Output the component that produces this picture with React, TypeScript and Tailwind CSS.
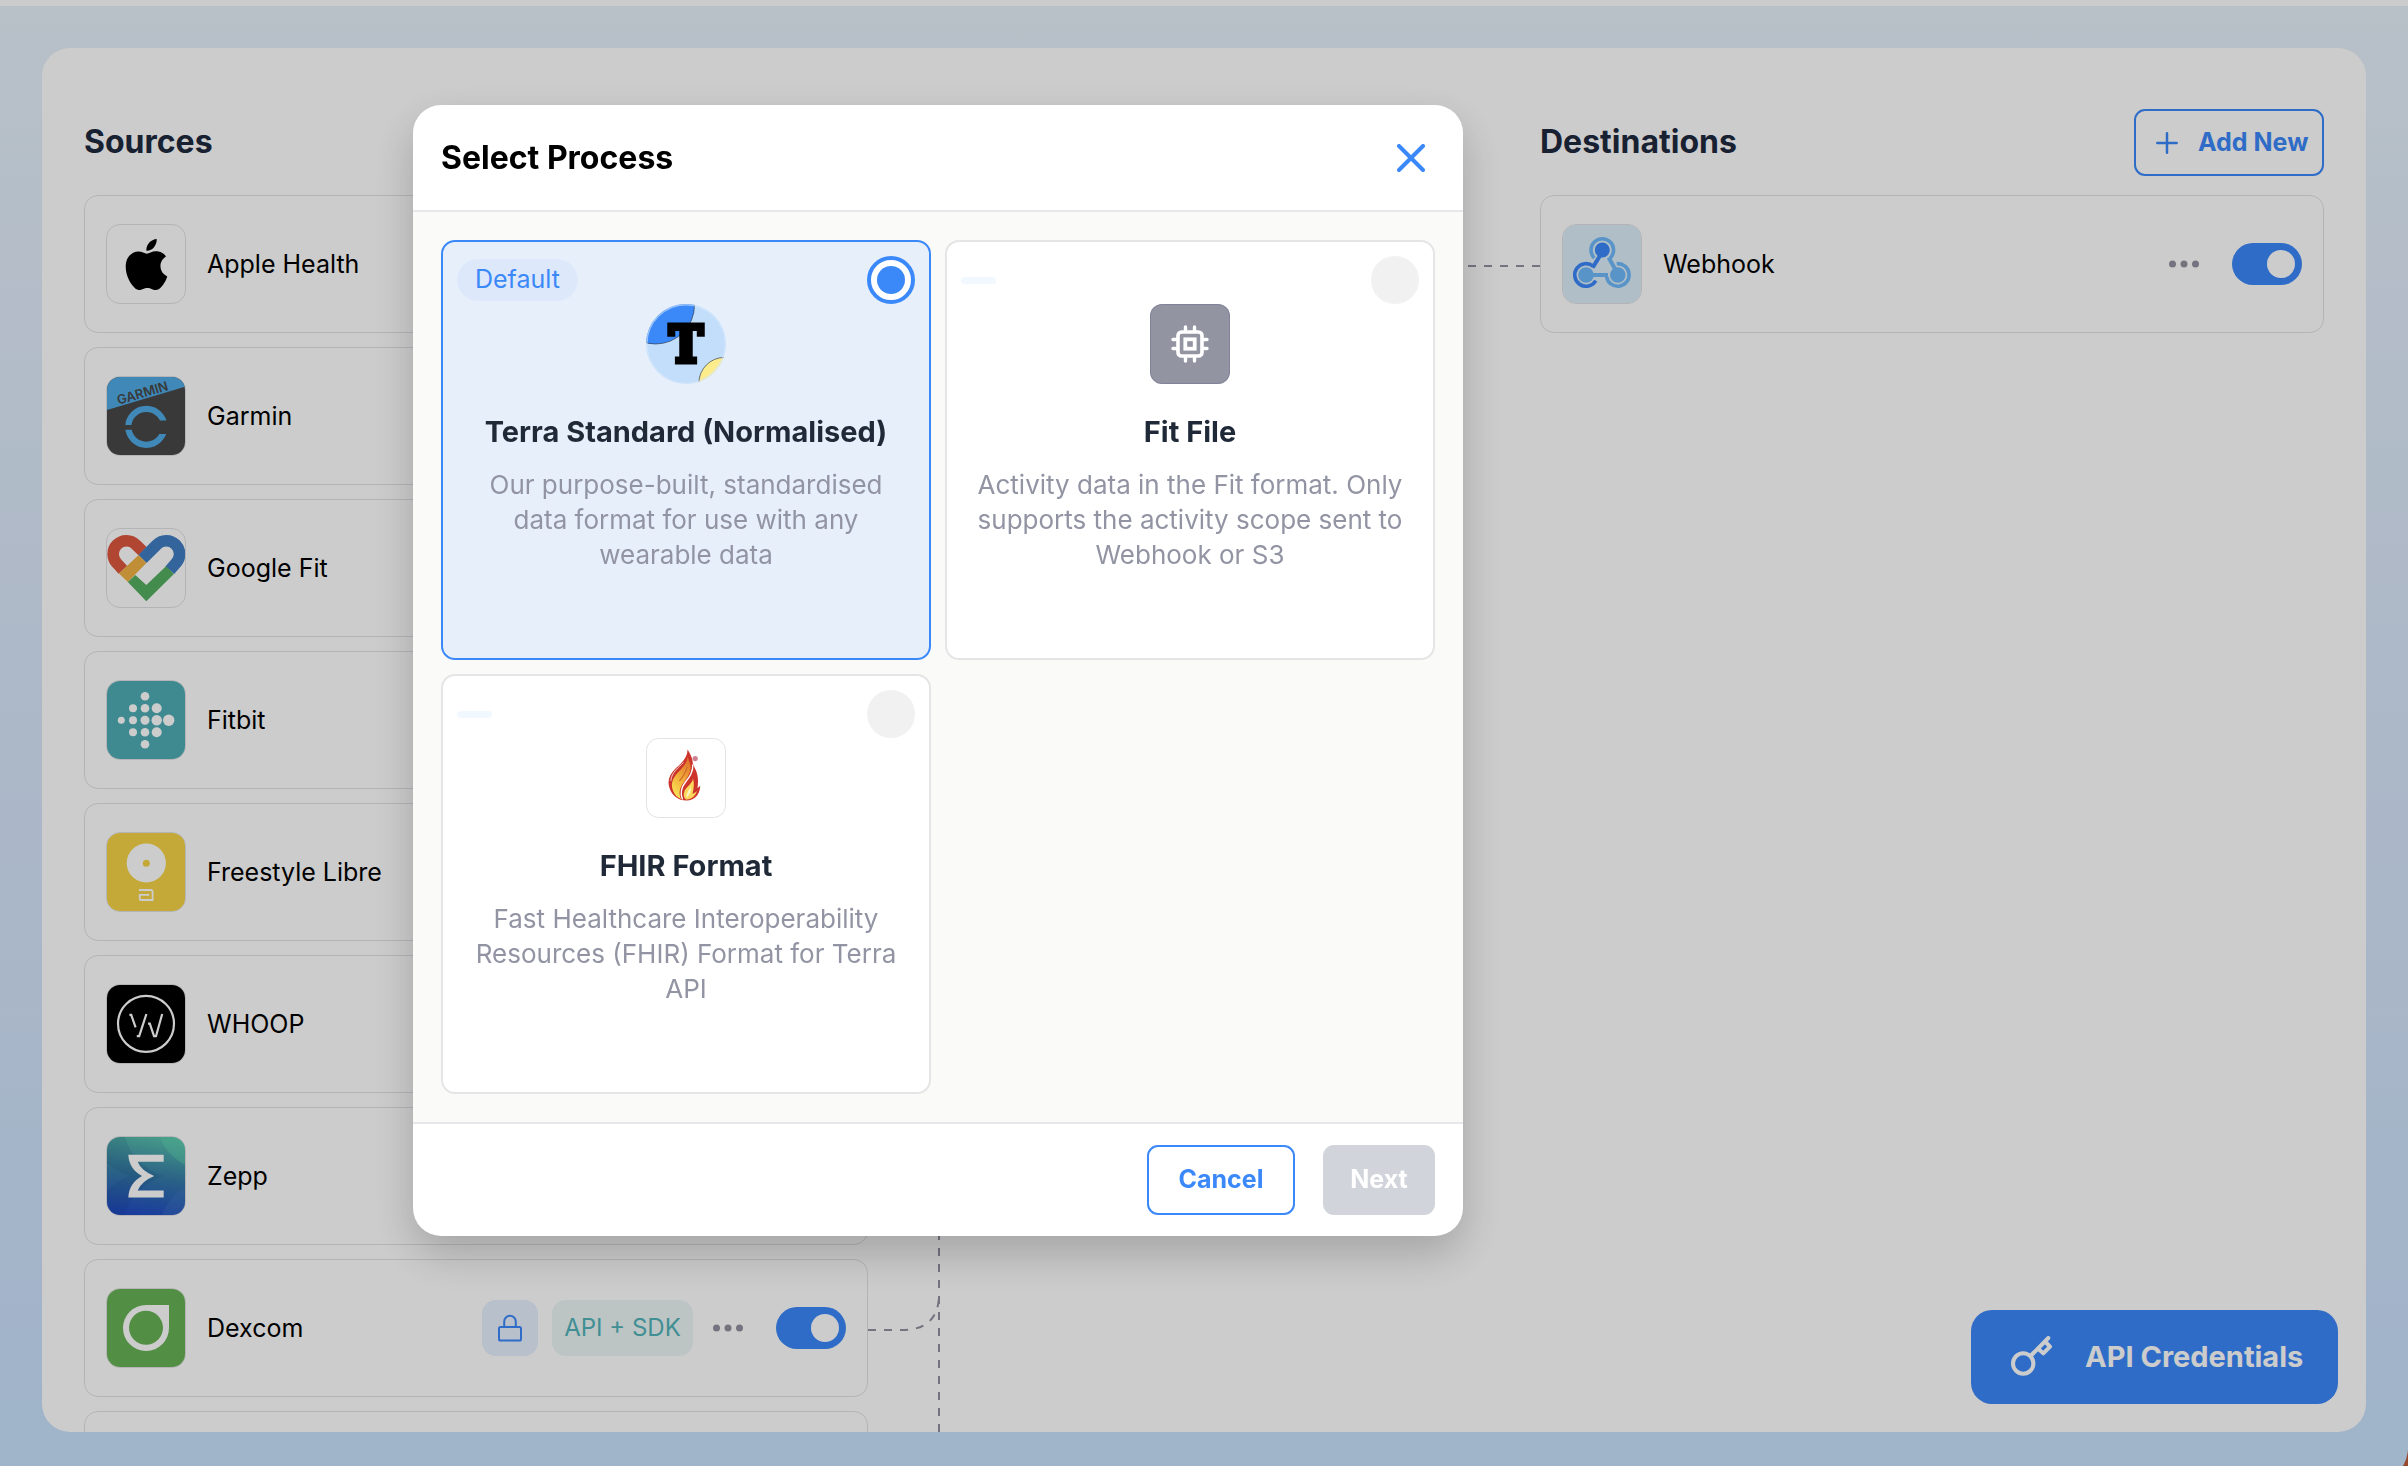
import { useState, type ReactNode } from "react";
import { SiApple } from "react-icons/si";

const full = "block h-full w-full";

function AppleArt() {
  return (
    <div className="flex h-full w-full items-center justify-center text-black">
      <SiApple size={51} />
    </div>
  );
}

function GarminArt() {
  return (
    <svg viewBox="0 0 78 78" className={full} aria-hidden="true">
      <defs>
        <clipPath id="garmin-ring">
          <rect x="0" y="20" width="39" height="28" />
          <rect x="39" y="20" width="39" height="23.6" />
          <rect x="0" y="52.7" width="39" height="25" />
          <rect x="39" y="57" width="39" height="20" />
        </clipPath>
      </defs>
      <rect width="78" height="78" fill="#484848" />
      <path d="M0 0H78V9.7L0 33Z" fill="#4faae5" />
      <text
        x="35.5"
        y="20.5"
        transform="rotate(-16.5 35.5 16)"
        textAnchor="middle"
        fontFamily="Inter, sans-serif"
        fontWeight="600"
        fontSize="13"
        fill="#484848"
      >
        GARMIN
      </text>
      <circle cx="39.3" cy="49.8" r="18" fill="none" stroke="#4faae5" strokeWidth="6.2" clipPath="url(#garmin-ring)" />
    </svg>
  );
}

function GoogleFitArt() {
  return (
    <svg viewBox="0 0 78 78" className={full} fill="none" strokeWidth="11.6" aria-hidden="true">
      <path d="M15.9 40.9L10.3 34.7A13.3 13.3 0 1 1 29.1 15.9L35.5 22.2" stroke="#dc583f" />
      <path d="M35.5 30L49.6 15.9A13.3 13.3 0 1 1 68.4 34.7L62.8 41.3" stroke="#407ec2" />
      <path d="M31.6 26L39.4 34L20.8 53L12 44.6Z" fill="#efb244" stroke="none" />
      <path d="M20.8 53L28.3 46L39.3 56L59 37.2L66.9 45L39.3 72.3Z" fill="#56ae62" stroke="none" />
    </svg>
  );
}

const fitbitDots = [
  [14.3, 39.3, 3.5],
  [26, 27.3, 4],
  [26, 39.3, 4],
  [26, 51.3, 4],
  [38, 15.3, 4.3],
  [38, 27.3, 4.3],
  [38, 39.3, 4.5],
  [38, 51.3, 4.3],
  [38, 63.3, 4.3],
  [49.7, 27.3, 5],
  [49.7, 39.3, 5.2],
  [49.7, 51.3, 5],
  [61.7, 39.3, 5.7],
];

function FitbitArt() {
  return (
    <svg viewBox="0 0 78 78" className={full} aria-hidden="true">
      <rect width="78" height="78" fill="#4fadb5" />
      {fitbitDots.map(([x, y, r]) => (
        <circle key={`${x}-${y}`} cx={x} cy={y} r={r} fill="#fff" />
      ))}
    </svg>
  );
}

function LibreArt() {
  return (
    <svg viewBox="0 0 78 78" className={full} aria-hidden="true">
      <rect width="78" height="78" fill="#f6d448" />
      <circle cx="39.3" cy="30" r="19.6" fill="#fff" />
      <circle cx="39.3" cy="30.3" r="3.5" fill="#f6d448" />
      <path d="M32 57H43.5Q45.6 57 45.6 59V67H34.2Q32.7 67 32.7 65.4V61.9H42.3" fill="none" stroke="#fff" strokeWidth="1.8" />
    </svg>
  );
}

function WhoopArt() {
  return (
    <svg viewBox="0 0 78 78" className={full} fill="none" stroke="#fff" strokeWidth="2.2" aria-hidden="true">
      <rect width="78" height="78" fill="#000" stroke="none" />
      <circle cx="39" cy="38.8" r="28" />
      <path d="M22.4 29.8H24.2L28.6 42.4M39.4 29L32.2 51.2H29.8M41 38.6H42.8L47 51.2H49L55.2 29" />
    </svg>
  );
}

function ZeppArt() {
  return (
    <svg viewBox="0 0 78 78" className={full} aria-hidden="true">
      <defs>
        <linearGradient id="zepp-sky" x1="0.6" y1="0" x2="0.45" y2="1">
          <stop offset="0" stopColor="#58bfaa" />
          <stop offset="0.5" stopColor="#357ba8" />
          <stop offset="1" stopColor="#214cc4" />
        </linearGradient>
      </defs>
      <rect width="78" height="78" fill="url(#zepp-sky)" />
      <path d="M0 0H18Q26 28 56 39Q26 50 18 78H0V54Q10 44 22 39Q10 34 0 26Z" fill="#123a70" fillOpacity="0.12" />
      <path d="M53 0H78V28Q58 16 53 0Z" fill="#62dbb4" fillOpacity="0.4" />
      <path d="M55 78Q62 60 78 50V78Z" fill="#4a7bc8" fillOpacity="0.3" />
      <path
        d="M21.3 17.7H56.7V24.7H30.7Q34 33.5 47.2 38.9Q34 44.5 30.7 53.4H56.7V60.4H21.3Q22 46 35 38.9Q22 32 21.3 17.7Z"
        fill="#fff"
      />
    </svg>
  );
}

function DexcomArt() {
  return (
    <svg viewBox="0 0 78 78" className={full} aria-hidden="true">
      <rect width="78" height="78" fill="#67b356" />
      <path
        fillRule="evenodd"
        d="M39 16H62V38.7A23 23 0 1 1 39 16ZM39 21.8A17 17 0 1 0 39 55.8A17 17 0 1 0 39 21.8Z"
        fill="#fff"
      />
    </svg>
  );
}

function WebhookArt() {
  return (
    <svg viewBox="1 1 78 78" className={full} fill="none" strokeWidth="3.6" aria-hidden="true">
      <rect width="80" height="80" fill="#dceefa" />
      <path d="M32.3 34A11.3 11.3 0 1 1 48.3 34" stroke="#70b9fb" />
      <path d="M46.6 33.6L53.6 46" stroke="#70b9fb" strokeWidth="4" />
      <path d="M54.7 39.7A11.3 11.3 0 1 1 44.6 52.4" stroke="#70b9fb" />
      <path d="M26 51H46" stroke="#70b9fb" strokeWidth="4" />
      <path d="M31.3 42.3A11.3 11.3 0 1 0 33.8 56.6" stroke="#3b88f9" />
      <path d="M38.5 31L30.6 43.6" stroke="#3b88f9" strokeWidth="4" />
      <circle cx="40.3" cy="26" r="7.5" fill="#3b88f9" />
      <circle cx="24" cy="51" r="7.8" fill="#70b9fb" />
      <circle cx="55.8" cy="51" r="7.8" fill="#70b9fb" />
    </svg>
  );
}

function TerraArt() {
  return (
    <svg viewBox="0 0 80 80" className="h-20 w-20" aria-hidden="true">
      <defs>
        <clipPath id="terra-disc">
          <circle cx="40" cy="40" r="40" />
        </clipPath>
      </defs>
      <g clipPath="url(#terra-disc)">
        <rect width="80" height="80" fill="#c3defb" />
        <circle cx="9.5" cy="1" r="39" fill="#3b88f9" stroke="#1f2937" strokeWidth="0.6" />
        <circle cx="78.5" cy="79" r="25.6" fill="#fdec8b" stroke="#1f2937" strokeWidth="0.6" />
        <circle cx="40" cy="40" r="39.2" fill="none" stroke="#d6e8fb" strokeOpacity="0.6" strokeWidth="1.6" />
      </g>
      <text
        x="40"
        y="58"
        textAnchor="middle"
        fontFamily="'DejaVu Serif Condensed', 'DejaVu Serif', serif"
        fontWeight="700"
        fontSize="50"
        fill="#000"
        stroke="#000"
        strokeWidth="5"
      >
        T
      </text>
    </svg>
  );
}

function FitFileArt() {
  return (
    <svg viewBox="0 0 80 80" className="h-20 w-20 rounded-xl bg-[#9294a1]" fill="none" stroke="#fff" aria-hidden="true">
      <rect x="0.5" y="0.5" width="79" height="79" rx="11.5" stroke="#82839a" />
      <rect x="28" y="28" width="24" height="24" rx="3.5" strokeWidth="3.6" />
      <rect x="35.3" y="35.3" width="9.4" height="9.4" strokeWidth="3.8" />
      <path
        d="M35.5 23V27M44.5 23V27M35.5 53V57M44.5 53V57M23 35.5H27M23 44.5H27M53 35.5H57M53 44.5H57"
        strokeWidth="3.4"
        strokeLinecap="round"
      />
    </svg>
  );
}

function FhirArt() {
  return (
    <svg viewBox="0 0 80 80" className="h-20 w-20" aria-hidden="true">
      <defs>
        <linearGradient id="fhir-gold" x1="0.7" y1="0" x2="0.3" y2="1">
          <stop offset="0" stopColor="#e0702a" />
          <stop offset="0.55" stopColor="#f2b23a" />
          <stop offset="1" stopColor="#fbe65a" />
        </linearGradient>
      </defs>
      <rect x="0.5" y="0.5" width="79" height="79" rx="12" fill="#fff" stroke="#e3e3e6" />
      <path
        d="M41.5 11.5C41.6 20 35 25.5 29 31C23.5 36.5 21 43 23.5 50C26 57.5 32 62.6 40.5 62.6C48 62.6 54 57 54.3 47.5C53.5 48.5 52.5 49.5 51.5 50C52.5 42 52.3 36 48.5 29.5L46.8 25.5C46.8 20 44 15.5 41.5 11.5Z"
        fill="#cc342c"
      />
      <path
        d="M41.5 19C41 26 36 30 31.5 35C26.5 40.5 24.5 46 27 52.5C28.5 56.5 31 59.5 35 61C32.5 55 33.5 50.5 37 45.5C41 40 45.5 34.5 44.5 27C43.8 24 42.5 21.5 41.5 19Z"
        fill="url(#fhir-gold)"
      />
      <path d="M46.8 26.5C47.2 34 43.5 39 39.5 44C35.5 49 33.5 54 36.5 61.5" fill="none" stroke="#fff" strokeWidth="1.4" />
      <path d="M37.5 24.5C33 29 25.5 34 24.8 43" fill="none" stroke="#f3d9d4" strokeWidth="0.9" />
      <path
        d="M47 40.5C46.5 46 40.5 48 38.3 53.5C37.2 57 37.7 60 40 61.5C45 62 49.5 58 51 53C49.5 54.5 48 55.5 46.5 55.8C47.8 50.5 48.5 45.5 47 40.5Z"
        fill="#fbd75c"
      />
      <path d="M40.5 60C40 55 43 52.5 45 48.5C45.3 53 44 56.5 40.5 60Z" fill="#fff6bf" />
      <path d="M33.5 43C37 38 40 35 41 29" fill="none" stroke="#d0682c" strokeWidth="1.2" />
      <circle cx="49.2" cy="20.6" r="2.6" fill="#cf8090" />
    </svg>
  );
}

function LockIcon() {
  return (
    <svg viewBox="0 0 24 28" className="h-7 w-6" fill="none" stroke="#3b88f9" strokeWidth="2" aria-hidden="true">
      <rect x="1" y="13" width="22" height="13.6" rx="1.6" />
      <path d="M6.2 13V7.6A5.8 5.8 0 0 1 17.8 7.6V13" />
    </svg>
  );
}

function DotsIcon() {
  return (
    <svg viewBox="0 0 42 42" className="h-[42px] w-[42px]" fill="#9292a0" aria-hidden="true">
      <circle cx="9.5" cy="21" r="3.5" />
      <circle cx="21" cy="21" r="3.5" />
      <circle cx="32.5" cy="21" r="3.5" />
    </svg>
  );
}

function KeyIcon() {
  return (
    <svg
      viewBox="0 0 42 42"
      className="h-[42px] w-[42px]"
      fill="none"
      stroke="#fff"
      strokeWidth="4"
      strokeLinecap="round"
      strokeLinejoin="round"
      aria-hidden="true"
    >
      <circle cx="12.2" cy="27.5" r="10.2" />
      <path d="M20 19.5L37.3 2M27.5 13L32.3 17.4L39 10.7L34.5 6" />
    </svg>
  );
}

function Toggle({ label }: { label: string }) {
  const [on, setOn] = useState(true);
  return (
    <input
      type="checkbox"
      role="switch"
      aria-label={label}
      checked={on}
      onChange={() => setOn(!on)}
      className="flex h-[42px] w-[70px] shrink-0 cursor-pointer appearance-none items-center rounded-full bg-gray-300 px-[7px] before:block before:h-7 before:w-7 before:rounded-full before:bg-white checked:justify-end checked:bg-[#3b88f9]"
    />
  );
}

function ConnectionCard({ name, art, auth }: { name: string; art?: ReactNode; auth?: string }) {
  return (
    <li className="flex h-[138px] shrink-0 items-center rounded-[14px] border border-[#e2e2e4] px-[21px]">
      {art && (
        <>
          <div className="h-20 w-20 shrink-0 overflow-hidden rounded-[14px] border border-[#e2e2e4]">{art}</div>
          <span className="ml-[21px] text-[25px] leading-9 text-black">{name}</span>
          <div className="ml-auto flex items-center">
            {auth && (
              <div className="mr-3.5 flex gap-3.5">
                <span className="flex h-14 w-14 items-center justify-center rounded-[14px] bg-[#e7f0fe]">
                  <LockIcon />
                </span>
                <span className="flex h-14 w-[141px] items-center justify-center rounded-[14px] bg-[#ebf7f6] text-[24px] text-[#51b3b9]">
                  {auth}
                </span>
              </div>
            )}
            <button type="button" aria-label={`${name} options`} className="mr-[27px]">
              <DotsIcon />
            </button>
            <Toggle label={`${name} enabled`} />
          </div>
        </>
      )}
    </li>
  );
}

const sources: { name: string; art?: ReactNode; auth?: string }[] = [
  { name: "Apple Health", art: <AppleArt /> },
  { name: "Garmin", art: <GarminArt /> },
  { name: "Google Fit", art: <GoogleFitArt /> },
  { name: "Fitbit", art: <FitbitArt /> },
  { name: "Freestyle Libre", art: <LibreArt /> },
  { name: "WHOOP", art: <WhoopArt /> },
  { name: "Zepp", art: <ZeppArt /> },
  { name: "Dexcom", art: <DexcomArt />, auth: "API + SDK" },
  { name: "" },
];

function Connectors() {
  return (
    <svg
      className="h-full min-w-0 flex-1 self-stretch"
      fill="none"
      stroke="#9292a0"
      strokeWidth="2"
      strokeDasharray="8 8"
      aria-hidden="true"
    >
      <line x1="8" y1="218" x2="100%" y2="218" />
      <line x1="71" y1="224" x2="71" y2="1384" />
      <path d="M0 1282H34Q71 1282 71 1246" />
    </svg>
  );
}

type Process = { id: string; title: string; text: string; art: ReactNode; badge?: string };

const processes: Process[] = [
  {
    id: "terra",
    title: "Terra Standard (Normalised)",
    text: "Our purpose-built, standardised data format for use with any wearable data",
    art: <TerraArt />,
    badge: "Default",
  },
  {
    id: "fit",
    title: "Fit File",
    text: "Activity data in the Fit format. Only supports the activity scope sent to Webhook or S3",
    art: <FitFileArt />,
  },
  {
    id: "fhir",
    title: "FHIR Format",
    text: "Fast Healthcare Interoperability Resources (FHIR) Format for Terra API",
    art: <FhirArt />,
  },
];

function ProcessCard({ process, selected, onSelect }: { process: Process; selected: boolean; onSelect: () => void }) {
  return (
    <label
      className={`flex h-[420px] cursor-pointer flex-col rounded-[14px] border-2 px-3.5 pt-3.5 ${
        selected ? "border-[#3b88f9] bg-[#e7f0fa]" : "border-[#e5e5e5] bg-white"
      }`}
    >
      <span className="flex h-12 items-center justify-between">
        {process.badge ? (
          <span className="flex h-[42px] items-center rounded-full bg-[#dde9fa] px-[18px] text-[25px] text-[#3b88f9]">
            {process.badge}
          </span>
        ) : (
          <span className="h-[7px] w-[35px] rounded-full bg-[#f1f8ff]" />
        )}
        <input
          type="radio"
          name="process"
          value={process.id}
          checked={selected}
          onChange={onSelect}
          className="flex h-12 w-12 appearance-none items-center justify-center rounded-full bg-[#f1f1f1] checked:border-4 checked:border-[#3b88f9] checked:bg-white checked:before:h-7 checked:before:w-7 checked:before:rounded-full checked:before:bg-[#3b88f9]"
        />
      </span>
      <span className="flex justify-center">{process.art}</span>
      <span className="mt-[27px] text-center text-[29px] leading-[42px] font-bold text-[#1f2937]">{process.title}</span>
      <span className="mt-3.5 px-2 text-center text-[26px] leading-[35px] text-[#9294a3]">{process.text}</span>
    </label>
  );
}

function ProcessDialog() {
  const [selected, setSelected] = useState("terra");
  return (
    <div
      role="dialog"
      aria-modal="true"
      aria-labelledby="process-title"
      className="w-[1050px] overflow-hidden rounded-[28px] bg-white shadow-[0_18px_44px_rgba(0,0,0,0.2)]"
    >
      <header className="flex h-[107px] items-center justify-between border-b-2 border-[#e5e7eb] px-7">
        <h2 id="process-title" className="text-[32px] font-bold text-black">
          Select Process
        </h2>
        <button type="button" aria-label="Close" className="p-2.5">
          <svg viewBox="0 0 28 28" className="h-7 w-7" stroke="#3b88f9" strokeWidth="4" strokeLinecap="round" aria-hidden="true">
            <path d="M2 2L26 26M26 2L2 26" />
          </svg>
        </button>
      </header>
      <div className="grid grid-cols-2 gap-3.5 bg-[#fafaf9] p-7">
        {processes.map((p) => (
          <ProcessCard key={p.id} process={p} selected={p.id === selected} onSelect={() => setSelected(p.id)} />
        ))}
      </div>
      <footer className="flex justify-end gap-7 border-t-2 border-[#e5e7eb] px-7 py-[21px]">
        <button
          type="button"
          className="h-[70px] w-[148px] rounded-[11px] border-2 border-[#3b88f9] text-[25px] font-bold text-[#3b88f9]"
        >
          Cancel
        </button>
        <button type="button" disabled className="h-[70px] w-28 rounded-[11px] bg-[#d1d5db] text-[25px] font-bold text-white">
          Next
        </button>
      </footer>
    </div>
  );
}

export default function App() {
  return (
    <div className="relative h-screen overflow-hidden border-t-[6px] border-white bg-linear-to-b from-[#e6f1fb] via-[#d8e6fa] to-[#c8e1fd] font-['Inter',sans-serif]">
      <main className="mx-[42px] mt-[42px] flex h-[calc(100vh-82px)] overflow-hidden rounded-[28px] bg-white px-[42px]">
        <section className="flex w-[784px] flex-col" aria-labelledby="sources-title">
          <h1 id="sources-title" className="mt-[61px] h-[86px] shrink-0 text-[32px] leading-[65px] font-bold text-[#1f2a3e]">
            Sources
          </h1>
          <ul className="flex flex-col gap-3.5">
            {sources.map((s) => (
              <ConnectionCard key={s.name} {...s} />
            ))}
          </ul>
        </section>
        <Connectors />
        <section className="w-[784px]" aria-labelledby="destinations-title">
          <div className="mt-[61px] flex h-[86px] items-start justify-between">
            <h1 id="destinations-title" className="text-[32px] leading-[65px] font-bold text-[#1f2a3e]">
              Destinations
            </h1>
            <button
              type="button"
              className="flex h-[67px] w-[190px] items-center rounded-[11px] border-2 border-[#3b88f9] pl-5 text-[25px] font-bold text-[#3b88f9]"
            >
              <svg
                viewBox="0 0 22 22"
                className="mr-5 h-[22px] w-[22px]"
                stroke="currentColor"
                strokeWidth="2.5"
                strokeLinecap="round"
                aria-hidden="true"
              >
                <path d="M11 1.3V20.7M1.3 11H20.7" />
              </svg>
              Add New
            </button>
          </div>
          <ul>
            <ConnectionCard name="Webhook" art={<WebhookArt />} />
          </ul>
        </section>
      </main>

      <button
        type="button"
        className="absolute right-[70px] bottom-[62px] flex h-[94px] w-[367px] items-center rounded-[21px] bg-[#3b88f9] pl-10 text-[29px] font-bold text-white"
      >
        <KeyIcon />
        <span className="ml-8">API Credentials</span>
      </button>

      <div className="fixed inset-0 bg-black/20 pt-[105px] pl-[413px]">
        <ProcessDialog />
      </div>

      <svg viewBox="0 0 5 16" className="fixed right-0 bottom-0 h-4 w-[5px]" aria-hidden="true">
        <path d="M5 0V16H0Q4 9 5 0Z" fill="#96492f" />
      </svg>
    </div>
  );
}
